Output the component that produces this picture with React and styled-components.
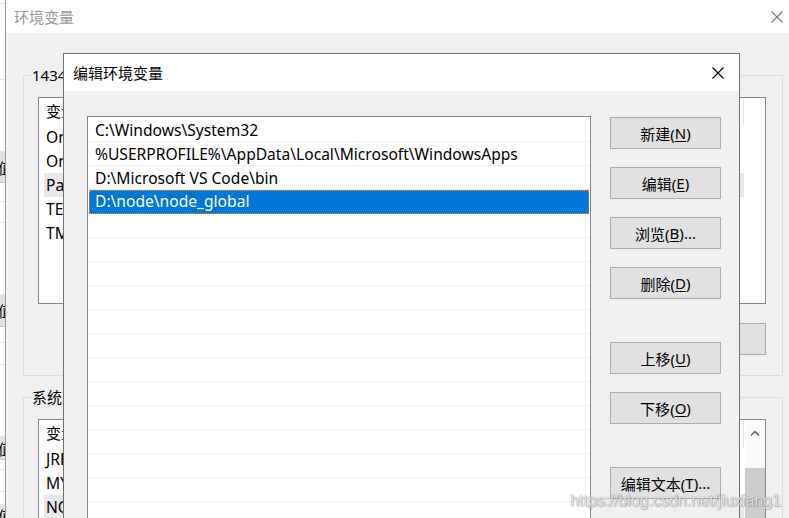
import React from 'react'
import styled, { createGlobalStyle } from 'styled-components'

const UI_FONT = `"Noto Sans", "Noto Sans CJK SC", sans-serif`

const GlobalStyle = createGlobalStyle`
  html, body {
    margin: 0;
    padding: 0;
    overflow: hidden;
    background: #fff;
  }
  body {
    font-family: ${UI_FONT};
  }
  * { box-sizing: border-box; }
`

const Desktop = styled.div`
  position: relative;
  width: 789px;
  height: 518px;
  overflow: hidden;
  background: #fff;
`

// window peeking out on the far left
const LeftWindow = styled.div`
  position: absolute;
  left: -120px;
  top: 0;
  width: 125px;
  height: 518px;
  background: #fff;
  display: flex;
  flex-direction: column;
  overflow: hidden;
`

const LeftStrip = styled.div`
  flex: 0 0 ${p => p.$h}px;
  background: ${p => (p.$head ? '#e1e1e1' : '#fff')};
  border-bottom: 1px solid ${p => (p.$head ? '#c9c9c9' : '#e6e6e6')};
  display: flex;
  align-items: center;
  justify-content: flex-end;
  font-size: 15px;
  color: #000;
  span { margin-right: -8px; }
`

const BgDialog = styled.div`
  position: absolute;
  left: 5px;
  top: 0;
  width: 795px;
  height: 540px;
  border-left: 1px solid #9a9a9a;
  background: #f0f0f0;
  display: flex;
  flex-direction: column;
`

const TitleBar = styled.div`
  flex: 0 0 ${p => p.$h}px;
  background: #fff;
  display: flex;
  align-items: center;
  justify-content: space-between;
  padding-left: ${p => p.$pad}px;
`

const Title = styled.div`
  font-size: 15px;
  line-height: 20px;
  color: ${p => (p.$dim ? '#9a9a9a' : '#000')};
`

const CloseBtn = styled.div`
  width: ${p => p.$w}px;
  height: 100%;
  display: flex;
  align-items: center;
  justify-content: center;
`

const BgBody = styled.div`
  flex: 1;
  display: flex;
  flex-direction: column;
  padding: 32px 17px 0 17px;
`

const GroupBox = styled.fieldset`
  margin: ${p => p.$top}px 0 0 0;
  border: 1px solid #dcdcdc;
  padding: 12px 16px 20px 14px;
  min-width: 0;
  display: flex;
  flex-direction: column;
`

const Legend = styled.legend`
  padding: 0 1px;
  margin-left: -7px;
  font-size: 15px;
  line-height: 20px;
  color: #000;
  white-space: nowrap;
`

const BgList = styled.div`
  height: ${p => p.$h}px;
  background: #fff;
  border: 1px solid #828790;
  display: flex;
  overflow: hidden;
`

const BgListContent = styled.div`
  flex: 1;
  display: flex;
  flex-direction: column;
  min-width: 0;
`

const BgHeader = styled.div`
  flex: 0 0 27px;
  display: flex;
`

const HeadCell = styled.div`
  width: ${p => p.$w}px;
  flex: 0 0 ${p => p.$w}px;
  border-right: 1px solid #e5e5e5;
  padding-left: 7px;
  font-size: 15px;
  line-height: 27px;
  color: #000;
  white-space: nowrap;
  overflow: hidden;
`

const BgRow = styled.div`
  flex: 0 0 24px;
  width: 700px;
  margin-left: 5px;
  padding-left: 2px;
  background: ${p => (p.$selected ? '#e8e8e8' : 'transparent')};
  font-size: 15.6px;
  line-height: 24px;
  color: #000;
  white-space: nowrap;
`

const ScrollBar = styled.div`
  flex: 0 0 20px;
  background: #fafafa;
  display: flex;
  flex-direction: column;
`

const ScrollArrow = styled.div`
  flex: 0 0 25px;
  display: flex;
  align-items: center;
  justify-content: center;
`

const ScrollThumb = styled.div`
  flex: 1;
  margin-top: 23px;
  background: #cdcdcd;
`

const ButtonRow = styled.div`
  display: flex;
  justify-content: flex-end;
  margin-top: 19px;
`

const WinButton = styled.button`
  width: ${p => p.$w || 111}px;
  height: 32px;
  margin-top: ${p => p.$mt || 0}px;
  padding: 0;
  background: #e1e1e1;
  border: 1px solid #adadad;
  border-radius: 0;
  font-family: ${UI_FONT};
  font-size: 15px;
  color: #000;
  display: flex;
  align-items: center;
  justify-content: center;
  white-space: nowrap;
  u { text-underline-offset: 2px; }
`

const Dialog = styled.div`
  position: absolute;
  left: 63px;
  top: 53px;
  width: 677px;
  height: 480px;
  border: 1px solid #707070;
  background: #f0f0f0;
  display: flex;
  flex-direction: column;
`

const DialogBody = styled.div`
  flex: 1;
  display: flex;
  gap: 19px;
  padding: 25px 18px 0 23px;
`

const PathList = styled.div`
  width: 504px;
  flex: 0 0 504px;
  height: 420px;
  background: #fff;
  border: 1px solid #828790;
  padding: 1px;
  display: flex;
  flex-direction: column;
  overflow: hidden;
`

const PathRow = styled.div`
  flex: 0 0 24px;
  padding-left: ${p => (p.$selected ? 5 : 6)}px;
  padding-top: ${p => (p.$selected ? 0 : 1)}px;
  border: ${p => (p.$selected ? '1px dotted #ff8728' : 'none')};
  border-bottom: ${p => (p.$selected ? '1px dotted #ff8728' : '1px solid #efefef')};
  background: ${p => (p.$selected ? '#0078d7' : '#fff')};
  color: ${p => (p.$selected ? '#fff' : '#000')};
  font-size: 15.6px;
  line-height: ${p => (p.$selected ? 21 : 22)}px;
  white-space: nowrap;
`

const ButtonColumn = styled.div`
  display: flex;
  flex-direction: column;
  padding-top: 1px;
`

const Watermark = styled.div`
  position: absolute;
  right: 8px;
  bottom: 6px;
  font-family: "Liberation Sans", Arial, sans-serif;
  font-size: 16px;
  line-height: 22px;
  color: rgba(255, 255, 255, 0.8);
  text-shadow: 0 0 1px rgba(0, 0, 0, 0.5), 1px 1px 1px rgba(0, 0, 0, 0.2);
  pointer-events: none;
`

const CloseIcon = ({ color }) => (
  <svg width="12" height="12" viewBox="0 0 12 12">
    <path d="M0.5 0.5 L11.5 11.5 M11.5 0.5 L0.5 11.5" stroke={color} strokeWidth="1.1" fill="none" />
  </svg>
)

const Chevron = () => (
  <svg width="10" height="6" viewBox="0 0 10 6">
    <polyline points="1,5.5 5,1.5 9,5.5" stroke="#606060" strokeWidth="1.5" fill="none" />
  </svg>
)

const leftStrips = [
  [4], [76], [72], [31, true], [19], [21], [72], [32, true], [16], [22], [72],
  [23, true], [10], [22], [13], [20, true],
]

const userVars = ['OneDrive', 'OneDriveConsumer', 'Path', 'TEMP', 'TMP']
const sysVars = ['JRE_HOME', 'MYSQL_HOME', 'NODE_PATH']

const paths = [
  'C:\\Windows\\System32',
  '%USERPROFILE%\\AppData\\Local\\Microsoft\\WindowsApps',
  'D:\\Microsoft VS Code\\bin',
  'D:\\node\\node_global',
]

const buttons = [
  { label: '新建', key: 'N', mt: 0 },
  { label: '编辑', key: 'E', mt: 18 },
  { label: '浏览', key: 'B', tail: '...', mt: 18 },
  { label: '删除', key: 'D', mt: 18 },
  { label: '上移', key: 'U', mt: 43 },
  { label: '下移', key: 'O', mt: 18 },
  { label: '编辑文本', key: 'T', tail: '...', mt: 43 },
]

export default function App() {
  const rows = [...paths, ...Array(14).fill('')]
  return (
    <>
      <GlobalStyle />
      <Desktop>
        <LeftWindow>
          {leftStrips.map(([h, head], i) => (
            <LeftStrip key={i} $h={h} $head={head}>
              {head && <span>值</span>}
            </LeftStrip>
          ))}
        </LeftWindow>

        <BgDialog>
          <TitleBar $h={33} $pad={8}>
            <Title $dim>环境变量</Title>
            <CloseBtn $w={46}>
              <CloseIcon color="#777" />
            </CloseBtn>
          </TitleBar>
          <BgBody>
            <GroupBox $top={0}>
              <Legend>14343 的用户变量(U)</Legend>
              <BgList $h={207}>
                <BgListContent>
                  <BgHeader>
                    <HeadCell $w={170}>变量</HeadCell>
                    <HeadCell $w={535}>值</HeadCell>
                  </BgHeader>
                  {userVars.map(v => (
                    <BgRow key={v} $selected={v === 'Path'}>{v}</BgRow>
                  ))}
                </BgListContent>
              </BgList>
              <ButtonRow>
                <WinButton $w={120}>新建(N)...</WinButton>
              </ButtonRow>
            </GroupBox>
            <GroupBox $top={11}>
              <Legend>系统变量(S)</Legend>
              <BgList $h={200}>
                <BgListContent>
                  <BgHeader>
                    <HeadCell $w={170}>变量</HeadCell>
                    <HeadCell $w={535}>值</HeadCell>
                  </BgHeader>
                  {sysVars.map(v => (
                    <BgRow key={v} $selected={v === 'NODE_PATH'}>{v}</BgRow>
                  ))}
                </BgListContent>
                <ScrollBar>
                  <ScrollArrow><Chevron /></ScrollArrow>
                  <ScrollThumb />
                </ScrollBar>
              </BgList>
            </GroupBox>
          </BgBody>
        </BgDialog>

        <Dialog>
          <TitleBar $h={37} $pad={9}>
            <Title>编辑环境变量</Title>
            <CloseBtn $w={42}>
              <CloseIcon color="#000" />
            </CloseBtn>
          </TitleBar>
          <DialogBody>
            <PathList>
              {rows.map((p, i) => (
                <PathRow key={i} $selected={i === 3}>{p}</PathRow>
              ))}
            </PathList>
            <ButtonColumn>
              {buttons.map(b => (
                <WinButton key={b.key} $mt={b.mt}>
                  {b.label}(<u>{b.key}</u>){b.tail}
                </WinButton>
              ))}
            </ButtonColumn>
          </DialogBody>
        </Dialog>

        <Watermark>https://blog.csdn.net/jiuxiang1</Watermark>
      </Desktop>
    </>
  )
}
